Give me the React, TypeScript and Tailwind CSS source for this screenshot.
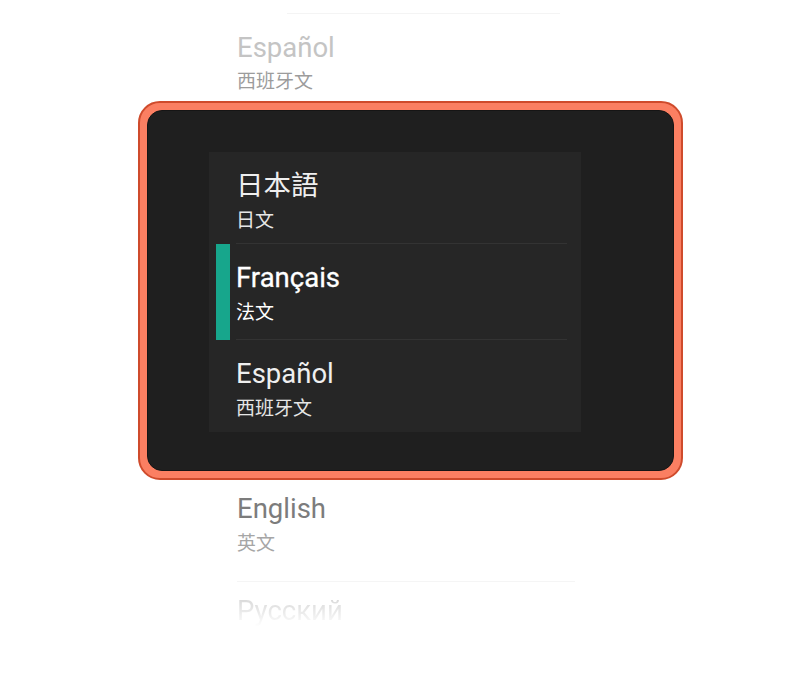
import React from "react";

type Lang = { name: string; sub: string };

const panelRows: (Lang & { active?: boolean })[] = [
  { name: "日本語", sub: "日文" },
  { name: "Français", sub: "法文", active: true },
  { name: "Español", sub: "西班牙文" },
];

function PanelRow({ name, sub, active, last }: Lang & { active?: boolean; last?: boolean }) {
  return (
    <div className={`relative flex flex-col pl-[27px] pt-[18px] ${active ? "h-[96px]" : "h-[92px]"}`}>
      {active && <div className="absolute left-[7px] top-0 h-full w-[14px] bg-[#17a68c]" />}
      <span className={`text-[27.5px] leading-[32px] ${active ? "text-white [-webkit-text-stroke:0.3px_white]" : "text-[#efefef]"}`}>
        {name}
      </span>
      <span className={`mt-[7px] text-[19px] leading-[24px] ${active ? "text-white" : "text-[#e6e6e6]"}`}>{sub}</span>
      {!last && <div className="absolute bottom-0 left-[27px] right-[14px] h-px bg-[#333333]" />}
    </div>
  );
}

export default function App() {
  return (
    <div className="min-h-screen w-full bg-white font-['Roboto','Noto_Sans_CJK_SC',sans-serif]">
      <div className="flex w-[683px] flex-col pl-[138px]">
        {/* faint divider above */}
        <div className="ml-[149px] mt-[13px] h-px w-[273px] bg-[#f4f4f4]" />

        <div className="mt-[18px] flex flex-col pl-[99px]">
          <span className="text-[27.5px] leading-[32px] text-[#c4c4c4]">Español</span>
          <span className="mt-[6px] text-[19px] leading-[24px] text-[#9c9c9c]">西班牙文</span>
        </div>

        {/* device frame */}
        <div className="mt-[7px] h-[379px] w-[545px] rounded-[22px] border-2 border-[#cf4b2c] bg-[#fb7f62] p-[7px]">
          <div className="h-full w-full rounded-[15px] border border-[#151515] bg-[#1f1f1f] pl-[61px] pt-[41px]">
            <div className="flex w-[372px] flex-col bg-[#262626]">
              {panelRows.map((r, i) => (
                <PanelRow key={r.name} {...r} last={i === panelRows.length - 1} />
              ))}
            </div>
          </div>
        </div>

        <div className="mt-[13px] flex flex-col pl-[99px]">
          <span className="text-[27.5px] leading-[32px] text-[#7c7c7c]">English</span>
          <span className="mt-[7px] text-[19px] leading-[24px] text-[#a6a6a6]">英文</span>
        </div>

        <div className="ml-[99px] mt-[25px] h-px w-[338px] bg-[#f5f5f5]" />

        <div className="mt-[13px] flex flex-col pl-[99px]">
          <span className="w-fit bg-gradient-to-b from-[#d4d4d4] to-[#ffffff] bg-clip-text text-[27.5px] leading-[32px] text-transparent">
            Русский
          </span>
        </div>
      </div>
    </div>
  );
}
